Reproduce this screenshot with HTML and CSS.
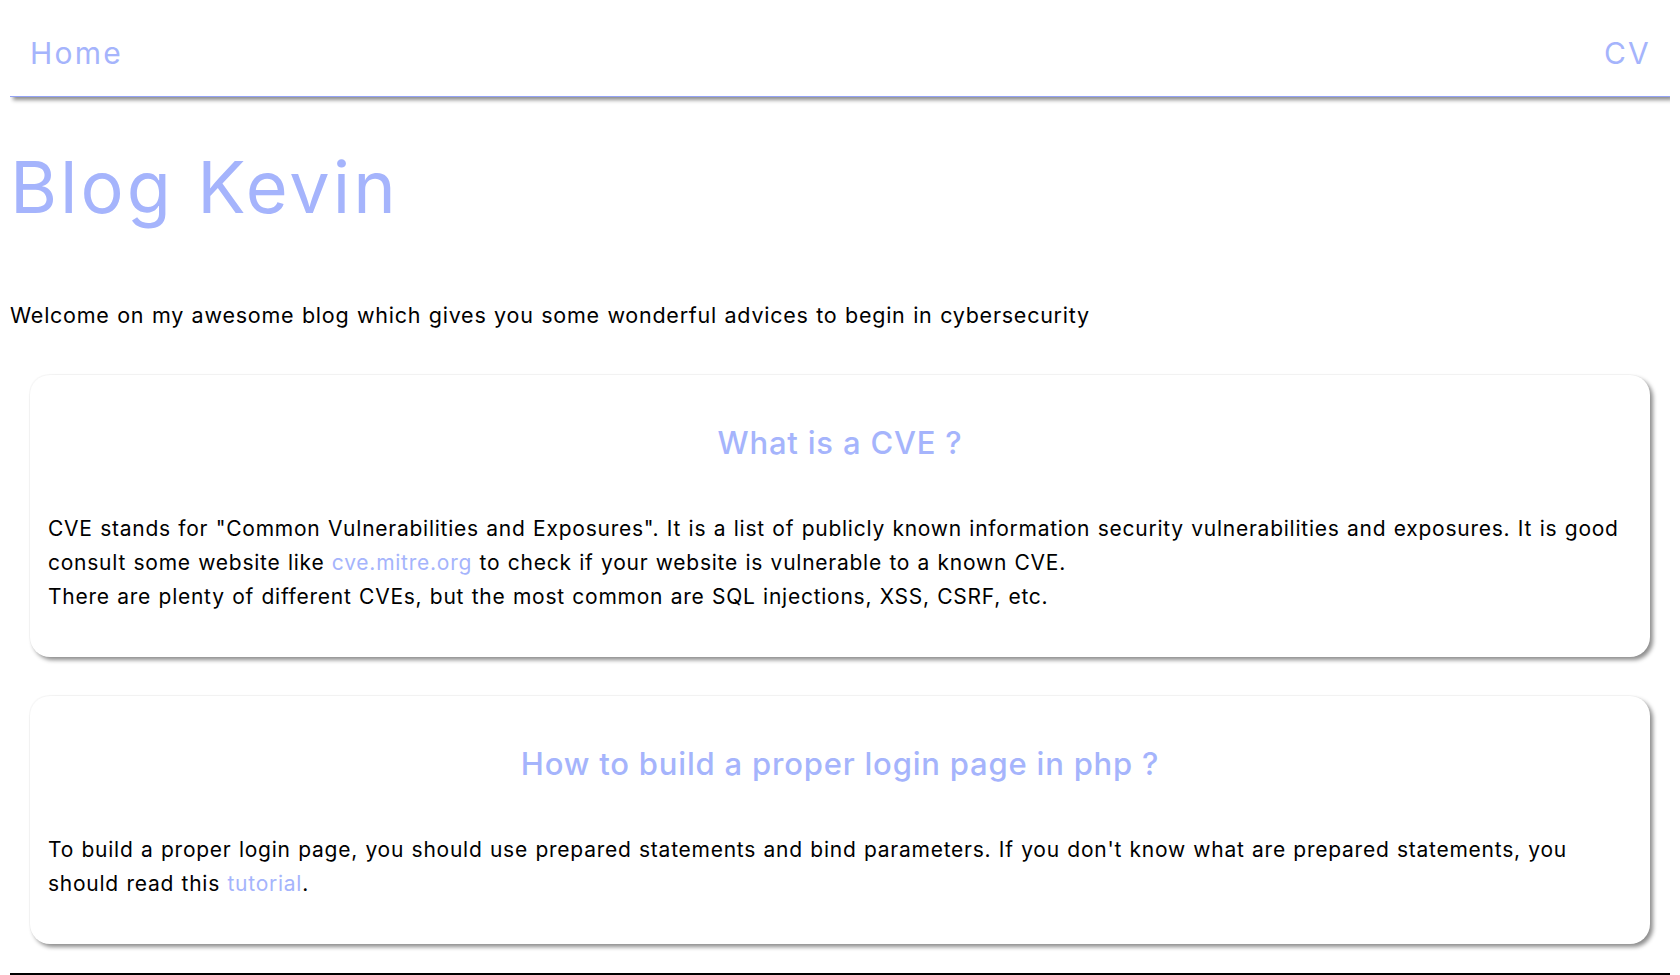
FILE: index.html
```html
<!DOCTYPE html>
<html lang="en">
<head>
<meta charset="utf-8">
<title>Blog Kevin</title>
<link rel="stylesheet" href="styles.css">
</head>
<body>
<nav class="navbar">
  <a class="nav-link" href="#">Home</a>
  <a class="nav-link" href="#">CV</a>
</nav>
<h1 class="title">Blog Kevin</h1>
<p class="intro">Welcome on my awesome blog which gives you some wonderful advices to begin in cybersecurity</p>
<article class="card">
  <h2 class="card-title">What is a CVE ?</h2>
  <p class="card-text">CVE stands for "Common Vulnerabilities and Exposures". It is a list of publicly known information security vulnerabilities and exposures. It is good consult some website like <a class="link" href="#">cve.mitre.org</a> to check if your website is vulnerable to a known CVE.<br>There are plenty of different CVEs, but the most common are SQL injections, XSS, CSRF, etc.</p>
</article>
<article class="card card-last">
  <h2 class="card-title">How to build a proper login page in php ?</h2>
  <p class="card-text">To build a proper login page, you should use prepared statements and bind parameters. If you don't know what are prepared statements, you should read this <a class="link" href="#">tutorial</a>.</p>
</article>
<footer class="footer"></footer>
</body>
</html>
```
FILE: styles.css
```css
html, body {
  background: #ffffff;
}
body {
  margin: 10px;
  font-family: "Inter", "Open Sans", sans-serif;
  color: #000;
}
.navbar {
  display: flex;
  justify-content: space-between;
  align-items: center;
  box-sizing: border-box;
  height: 87px;
  padding: 0 19px 0 20px;
  background: #fff;
  border-bottom: 1px solid #94a3f5;
  box-shadow: 3px 3px 4px rgba(0,0,0,0.45), -1px -1px 1px rgba(0,0,0,0.03);
}
.nav-link {
  color: #a5b4fc;
  text-decoration: none;
  font-size: 30px;
  letter-spacing: 2.2px;
}
.title {
  font-weight: 400;
  font-size: 72px;
  line-height: 86px;
  color: #a5b4fc;
  margin: 47px 0 0 0;
  letter-spacing: 3px;
}
.intro {
  font-size: 21.5px;
  line-height: 30px;
  letter-spacing: 0.75px;
  word-spacing: 0.8px;
  margin: 70px 0 45px 0;
}
.card {
  margin: 0 20px 39px 20px;
  padding: 45px 18px 43px 18px;
  border-radius: 20px;
  background: #fff;
  box-shadow: 3px 3px 4px rgba(0,0,0,0.45), -1px -1px 1px rgba(0,0,0,0.03);
}
.card-last {
  margin-bottom: 29px;
}
.card-title {
  margin: 0 0 47px 0;
  text-align: center;
  font-size: 31px;
  line-height: 45px;
  font-weight: 500;
  letter-spacing: 0.8px;
  color: #a5b4fc;
}
.card-text {
  margin: 0;
  font-size: 21px;
  line-height: 34px;
  letter-spacing: 0.75px;
  word-spacing: 0.8px;
}
.link {
  color: #a5b4fc;
  text-decoration: none;
}
.footer {
  margin: 0 -10px;
  height: 20px;
  background: #000;
}
```
